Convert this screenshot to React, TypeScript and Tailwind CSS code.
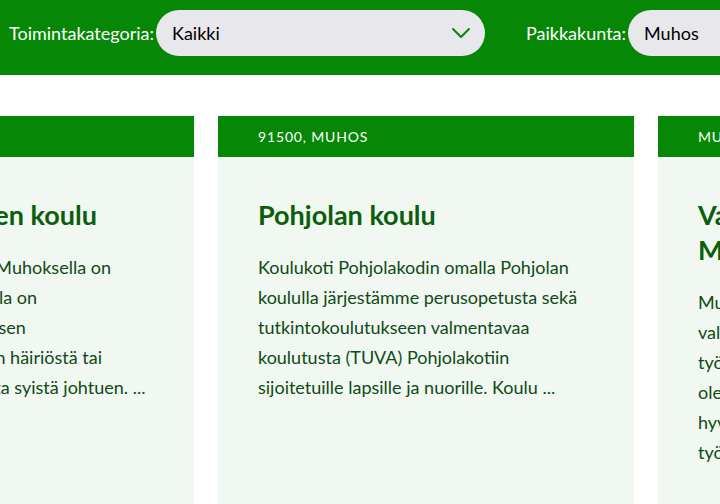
import { ChevronDown } from 'lucide-react'

const cards = [
	{
		place: '91500, Muhos',
		title: ['Ala-Kallioniemen koulu'],
		lines: [
			'Kasvatus- ja koulukoti Muhoksella on',
			'oma koulu. Sen oppilailla on',
			'hyvinvoinnin ja kehityksen',
			'tuen tarve esim. elämän häiriöstä tai',
			'muista kasvatuksellisista syistä johtuen. ...',
		],
	},
	{
		place: '91500, Muhos',
		title: ['Pohjolan koulu'],
		lines: [
			'Koulukoti Pohjolakodin omalla Pohjolan',
			'koululla järjestämme perusopetusta sekä',
			'tutkintokoulutukseen valmentavaa',
			'koulutusta (TUVA) Pohjolakotiin',
			'sijoitetuille lapsille ja nuorille. Koulu ...',
		],
	},
	{
		place: 'Muhos',
		title: ['Valmentava työpaja', 'Muhos'],
		lines: [
			'Muhoksen työpaja tarjoaa',
			'valmennusta ja tukea',
			'työelämään siirtymiseen.',
			'olemme täällä sinua varten',
			'hyvässä yhteistyössä',
			'työllisyyspalvelujen kanssa.',
		],
	},
]

const Select = ({ value, width }: { value: string; width: string }) => (
	<div
		className={`flex h-[46px] ${width} shrink-0 items-center justify-between rounded-full bg-[#e8e7ec] pl-[16px] pr-[8px] text-[18px] text-black`}
	>
		<span>{value}</span>
		<ChevronDown className="h-8 w-8 text-[#068806]" strokeWidth={1.5} />
	</div>
)

export default function App() {
	return (
		<div className="h-[504px] w-[720px] overflow-hidden bg-white font-['Lato',sans-serif]">
			<div className="flex h-[75px] items-center bg-[#068806] pb-[9px] pl-[9px]">
				<span className="mr-[2px] text-[18px] text-white">Toimintakategoria:</span>
				<Select value="Kaikki" width="w-[329px]" />
				<span className="ml-[41px] mr-[2px] text-[18px] text-white">Paikkakunta:</span>
				<Select value="Muhos" width="w-[240px]" />
			</div>

			<div className="ml-[-222px] mt-[41px] flex gap-[24px]">
				{cards.map((c) => (
					<div key={c.place + c.title[0]} className="h-[400px] w-[416px] shrink-0 bg-[#f1f7f1]">
						<div className="flex h-[41px] items-center bg-[#068806] px-[40px] text-[14px] uppercase tracking-[0.06em] text-white">
							{c.place}
						</div>
						<div className="px-[40px] pt-[40px]">
							<h2 className="text-[27px] font-bold leading-[35px] text-[#0b5e0b]">
								{c.title.map((t) => (
									<span key={t} className="block whitespace-nowrap">
										{t}
									</span>
								))}
							</h2>
							<p className="mt-[20px] text-[18px] leading-[30px] text-[#0f4a17]">
								{c.lines.map((l) => (
									<span key={l} className="block whitespace-nowrap">
										{l}
									</span>
								))}
							</p>
						</div>
					</div>
				))}
			</div>
		</div>
	)
}
